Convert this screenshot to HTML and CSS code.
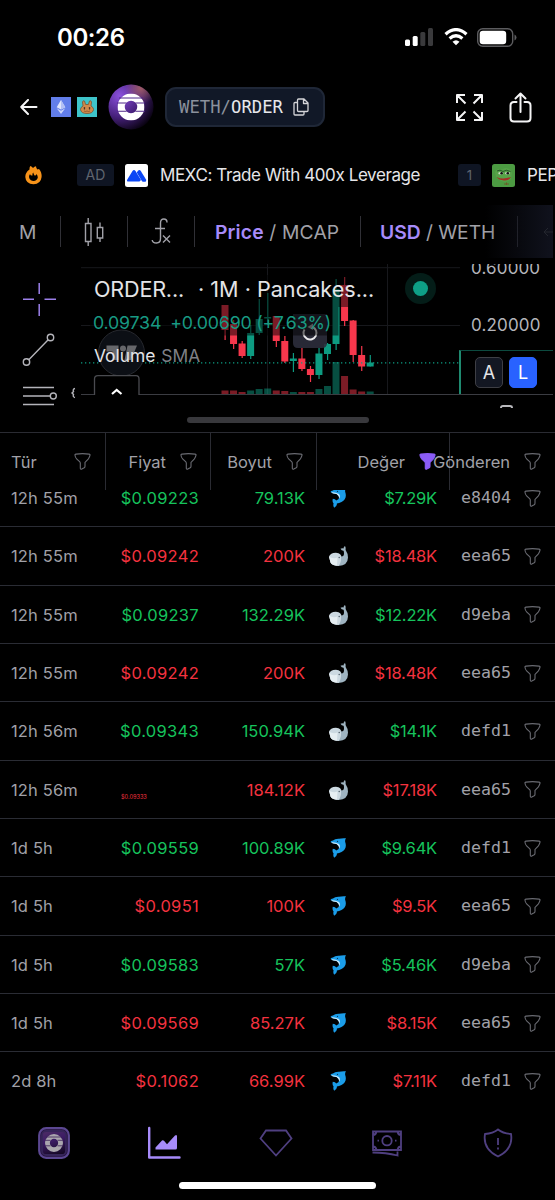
FILE: index.html
```html
<!DOCTYPE html>
<html lang="tr">

<head>
    <meta charset="UTF-8">
    <meta name="viewport" content="width=device-width, initial-scale=1.0">
    <title>WETH/ORDER</title>
    <link rel="stylesheet" href="styles.css">
</head>

<body>
    <svg class="sprite">
        <linearGradient id="orderBg" x1="0.3" y1="0" x2="0.6" y2="1">
            <stop offset="0" stop-color="#7b4a9a" />
            <stop offset="0.4" stop-color="#5b2a9c" />
            <stop offset="1" stop-color="#08010f" />
        </linearGradient>
        <symbol id="filter" viewBox="0 0 17 17">
            <path d="M1 2.2Q.6 1.4 2 1.1Q8.5.2 15 1.1Q16.4 1.4 16 2.2Q15.6 4.4 14.4 5.8L11 9.4V13.2Q11 14.2 10.2 14.7L7.8 16.1Q6.4 16.5 6.3 15.2V10Q6.2 9.3 5.6 8.7L2.6 5.8Q1.3 4.5 1 2.2Z" />
        </symbol>
        <symbol id="ring" viewBox="0 0 26 26">
            <path fill-rule="evenodd" d="M13 0A13 13 0 1 1 13 26A13 13 0 1 1 13 0ZM13 7A6 6 0 1 0 13 19A6 6 0 1 0 13 7Z" />
        </symbol>
        <symbol id="whale" viewBox="0 0 19 20">
            <path fill="#9fb4c1" d="M8 7.500Q11.500 7 12.500 10.500Q15 10.500 15 7.500Q15 5.500 14.500 4.800Q12.500 4.600 11.500 2.800Q13 1.800 14.500 2.600Q14.600 .8 16 0Q17 1.600 16.600 4Q19 7.500 19 11.500Q18.800 19.500 9.500 20Q6 19.500 5 17Z" />
            <path fill="#ccd9e1" d="M0 10.500Q1.500 6.600 7 6.700Q11.800 7 12 11.500Q12.500 16.500 9.500 20Q3 19.800 1.500 16.500Z" />
            <path fill="#e6eef2" d="M0 10.800Q4 13 8.500 11.600L8 19.600Q3 19.300 1.500 16.500Z" />
            <circle cx="10.200" cy="11.500" r=".7" fill="#45545f" />
        </symbol>
        <symbol id="dolphin" viewBox="0 0 17 20">
            <path fill="#1b9de9" d="M.5 4Q.5 2.800 3 2.500Q5 .6 9 .8Q12 0 16 .3Q14.800 2 15.200 4Q17.500 11 11.500 14Q9 15.400 6.800 15.400Q7.500 17.500 4.200 19.800Q2.800 18 3.600 15.600Q2 14 2.800 10.800Q5.500 11 6.200 12.600Q9 11.500 9.200 9.500Q9 7.500 6.500 6Q2 5.600 .5 4Z" />
            <path fill="#cfeafa" d="M1 4.400Q5 3.800 8.500 5.800Q11 8 9.200 10.500Q9.300 7.500 6.500 6Q2.500 5.700 1 4.400Z" />
            <circle cx="7.500" cy="3.400" r=".6" fill="#0b3554" />
        </symbol>
    </svg>

    <div class="status-bar">
        <span class="time">00:26</span>
        <div class="status-icons">
            <svg width="30" height="18" viewBox="0 0 30 18">
                <rect x="0" y="11.500" width="5" height="6.500" rx="1.500" fill="#fff" />
                <rect x="7.700" y="8" width="5" height="10" rx="1.500" fill="#fff" />
                <rect x="15.300" y="4" width="5" height="14" rx="1.500" fill="#3a3a3c" />
                <rect x="23" y="0" width="5" height="18" rx="1.500" fill="#3a3a3c" />
            </svg>
            <svg width="24" height="18" viewBox="0 0 24 18" fill="none" stroke="#fff" stroke-width="3.200">
                <path d="M1.500 6.200Q12-3 22.500 6.200" />
                <path d="M5.600 10.500Q12 5 18.400 10.500" />
                <path d="M8.500 13.700Q12 10.700 15.500 13.700L12 17.300Z" fill="#fff" stroke="none" />
            </svg>
            <svg width="40" height="19" viewBox="0 0 40 19">
                <rect x=".7" y=".7" width="35" height="17.600" rx="5" fill="none" stroke="#5c5c5f" stroke-width="1.400" />
                <rect x="2.700" y="2.700" width="26.500" height="13.600" rx="3.200" fill="#fff" />
                <path d="M37.500 6.500Q39.500 7.500 39.500 9.500T37.500 12.500Z" fill="#5c5c5f" />
            </svg>
        </div>
    </div>

    <div class="header">
        <svg class="back" width="18" height="16" viewBox="0 0 18 16">
            <path d="M8 1L1.200 8L8 15M1.200 8H16.500" />
        </svg>
        <svg class="chain" width="20" height="20" viewBox="0 0 20 20">
            <rect width="20" height="20" fill="#627eea" />
            <path d="M10 3L14.300 10.200L10 12.600L5.700 10.200Z" fill="#dfe5fc" />
            <path d="M10 3L14.300 10.200L10 12.600Z" fill="#b3c0f5" />
            <path d="M5.700 11.200L10 13.700L14.300 11.200L10 17Z" fill="#cdd6f9" />
        </svg>
        <svg class="dex" width="20" height="20" viewBox="0 0 20 20">
            <rect width="20" height="20" fill="#3ec4ca" />
            <path d="M6 9L5.500 5Q6 3 7.500 4L8.600 7.500H11.400L12.500 4Q14 3 14.500 5L14 9Q16.800 10.500 16.500 12.500Q16 16.500 10 16.500T3.500 12.500Q3.300 10.500 6 9Z" fill="#d08a4c" stroke="#7b5433" stroke-width=".8" />
            <rect x="6.800" y="10" width="1.300" height="2.500" rx=".6" fill="#4b3324" />
            <rect x="11.900" y="10" width="1.300" height="2.500" rx=".6" fill="#4b3324" />
            <path d="M7 14Q8.500 15 10 14Q11.500 15 13 14" fill="none" stroke="#7b4a28" stroke-width=".7" />
        </svg>
        <svg class="token" width="46" height="46" viewBox="0 0 46 46">
            <defs>
                <radialGradient id="tokenBg" cx=".25" cy=".25" r=".85">
                    <stop offset="0" stop-color="#8a50dd" />
                    <stop offset=".55" stop-color="#47217c" />
                    <stop offset="1" stop-color="#08020f" />
                </radialGradient>
                <radialGradient id="tokenGlow" cx=".72" cy=".08" r=".35">
                    <stop offset="0" stop-color="#b56a63" stop-opacity=".8" />
                    <stop offset="1" stop-color="#b56a63" stop-opacity="0" />
                </radialGradient>
            </defs>
            <circle cx="23" cy="23" r="22.500" fill="url(#tokenBg)" />
            <circle cx="23" cy="23" r="22.500" fill="url(#tokenGlow)" />
            <use href="#ring" x="9.500" y="9.500" width="27" height="27" fill="#fff" />
            <path d="M11 14H35M9 19H18.500M37 19H27.500M9 27.300H18.500M37 27.300H27.500" stroke="#4f2789" stroke-width="1.100" />
        </svg>
        <div class="pair">
            <span class="pair-text"><span class="base">WETH/</span>ORDER</span>
            <svg width="16" height="18" viewBox="0 0 16 18">
                <path d="M5.500 1H11L15 5V12.500Q15 13.500 14 13.500H5.500Q4.500 13.500 4.500 12.500V2Q4.500 1 5.500 1ZM10.500 1V5.500H15M4.500 4.500H2Q1 4.500 1 5.500V16Q1 17 2 17H10Q11 17 11 16V13.500" />
            </svg>
        </div>
        <svg class="expand" width="27" height="27" viewBox="0 0 27 27">
            <path d="M1 9V1H9M1 1L9.500 9.500M18 1H26V9M26 1L17.500 9.500M1 18V26H9M1 26L9.500 17.500M26 18V26H18M26 26L17.500 17.500" />
        </svg>
        <svg class="share" width="23" height="31" viewBox="0 0 23 31">
            <path d="M7.500 10H5Q1.500 10 1.500 13.500V26Q1.500 29.500 5 29.500H18Q21.500 29.500 21.500 26V13.500Q21.500 10 18 10H15.500M11.500 20V2M6.500 6.500L11.500 1.500L16.500 6.500" />
        </svg>
    </div>

    <div class="trending">
        <svg class="flame" width="17" height="19" viewBox="0 0 17 19">
            <path fill-rule="evenodd" fill="#f7931a" d="M4.500 3.500Q4.300 1.500 5.200 0Q7 .5 8 2Q9.500.4 11 .2Q11 2 12.500 3.500L14 3Q17 6.500 16.600 11Q15.800 18 8.500 18.300Q.8 18 .3 11Q.2 6.500 4.500 3.500ZM5 8Q3.500 10 4.200 12Q5.500 15 8.500 15Q12 14.800 12.800 11.500Q12.800 9.500 11.500 8Q11 10 9.500 9.500Q8.500 8 8.300 6.500Q7 7.500 7.500 9.500Q5.500 10 5 8Z" />
        </svg>
        <span class="chip chip-ad">AD</span>
        <svg class="ad-logo" width="23" height="23" viewBox="0 0 23 23">
            <rect width="23" height="23" rx="2.500" fill="#fff" />
            <path d="M2.500 17.500Q1.500 16.800 2.300 15.500L7.500 7Q9 5 10.500 7L16 16L14.500 17.500Z" fill="#0b46f5" />
            <path d="M11.800 8.500L13 6.800Q14.500 5.200 15.800 7L21 15.500Q21.700 17 20.500 17.700H18Q17.300 17.700 16.700 16.800Z" fill="#0b46f5" />
        </svg>
        <span class="trend-name ad-name">MEXC: Trade With 400x Leverage</span>
        <span class="chip chip-rank">1</span>
        <svg class="pepe" width="23" height="23" viewBox="0 0 23 23">
            <rect width="23" height="23" rx="2.500" fill="#4c9b42" />
            <path d="M3 8Q5 3.500 10 5.500Q14 2.500 18 5.500L20 9L19 15Q15 19 9 17L4 13Z" fill="#56a348" />
            <path d="M5 7Q8 5 11 7.500Q14 5 18.500 7.500" fill="none" stroke="#28582a" />
            <ellipse cx="8.800" cy="9.300" rx="2.600" ry="1.200" fill="#c9d8c0" />
            <ellipse cx="15.500" cy="9.300" rx="2.600" ry="1.200" fill="#c9d8c0" />
            <circle cx="9.600" cy="9.300" r="1.300" fill="#111" />
            <circle cx="15.800" cy="9.300" r="1.300" fill="#111" />
            <path d="M4.500 13Q11 16 19 13Q17 17 12 16.500Q6.500 16 4.500 13Z" fill="#a52f26" />
            <path d="M12 20H17M14.500 18.500V21" stroke="#6d5a2b" />
        </svg>
        <span class="trend-name">PEP</span>
    </div>

    <div class="toolbar">
        <span class="tool interval">M</span>
        <span class="tool tool-icon">
            <svg width="20" height="30" viewBox="0 0 20 30">
                <path d="M1.500 6.500H7V24.500H1.500ZM4.200 1V6.500M4.200 24.500V29M13.300 10.500H18.700V21H13.300ZM16 5.500V10.500M16 21V25" />
            </svg>
        </span>
        <span class="tool tool-icon">
            <svg width="21" height="27" viewBox="0 0 21 27">
                <path d="M16 4.500Q16 1 12.800 1Q9.500 1 9.500 5V20.500Q9.500 25 5.500 25Q1.500 25 1.200 22M4 10.500H14M12 17.500L19 24.500M19 17.500L12 24.500" />
            </svg>
        </span>
        <span class="tool price-toggle"><b>Price</b> / MCAP</span>
        <span class="tool usd-toggle"><b>USD</b> / WETH</span>
        <span class="undo">
            <svg width="10" height="10" viewBox="0 0 10 10"><path d="M5 1L1 5L5 9M1 5H10" /></svg>
        </span>
    </div>

    <div class="chart">
        <div class="draw-tools">
            <svg width="81" height="150" viewBox="0 0 81 150" fill="none">
                <path d="M39.200 25V36M39.200 46V58M23 41.300H34M44.500 41.300H56" stroke="#9c80ea" stroke-width="1.500" />
                <g stroke="#b4b4ba" stroke-width="1.400">
                    <circle cx="26.500" cy="104" r="3.200" />
                    <circle cx="50.500" cy="79.500" r="3.200" />
                    <path d="M28.800 101.700L48.200 81.800M23 129.500H54M23 138H50M23 146.500H54" />
                    <circle cx="53.300" cy="138" r="3" />
                    <path d="M75 130.500Q72.500 131 73.500 133.500L72 135L73.500 136.500Q72.500 139 75 139.500" />
                </g>
            </svg>
        </div>
        <div class="plot">
            <svg id="candles" width="379" height="137" viewBox="81 258 379 137"></svg>
            <div class="legend">
                <div class="legend-row title"><span class="symbol">ORDER...</span><span>· 1M · Pancakes...</span></div>
                <div class="legend-row values"><span>0.09734</span><span>+0.00690 (+7.63%)</span></div>
                <div class="legend-row volume">Volume <span>SMA</span></div>
            </div>
            <span class="live-dot"></span>
        </div>
        <div class="axis">
            <span class="axis-label first">0.60000</span>
            <span class="axis-label">0.20000</span>
            <div class="scale-btns">
                <span class="scale">A</span>
                <span class="scale active">L</span>
            </div>
        </div>
    </div>

    <div class="resize"><span class="handle"></span><span class="gear"></span></div>

    <div class="table">
        <div class="thead">
            <div class="th type">Tür<svg class="filter"><use href="#filter" /></svg></div>
            <div class="th">Fiyat<svg class="filter"><use href="#filter" /></svg></div>
            <div class="th">Boyut<svg class="filter"><use href="#filter" /></svg></div>
            <div class="th">Değer<svg class="filter on"><use href="#filter" /></svg></div>
            <div class="th">Gönderen<svg class="filter"><use href="#filter" /></svg></div>
        </div>
        <div class="tbody">
            <div class="rows" id="rows"></div>
        </div>
    </div>

    <div class="navbar">
        <span class="nav-item">
            <svg width="32" height="32" viewBox="0 0 32 32">
                <rect x="1.200" y="1.200" width="29.600" height="29.600" rx="7" fill="#231039" stroke="#5b4791" stroke-width="2.200" />
                <rect x="4" y="4" width="24" height="24" rx="4" fill="url(#orderBg)" opacity=".45" />
                <use href="#ring" x="7" y="7" width="18" height="18" fill="#aaa6ae" />
                <path d="M8 10H24M7 13.300H12.500M25 13.300H19.500M7 18.800H12.500M25 18.800H19.500" stroke="#3b2157" stroke-width=".8" />
            </svg>
        </span>
        <span class="nav-item chart-nav">
            <svg width="34" height="34" viewBox="0 0 34 34">
                <path d="M2.200 2V31.500H32.500" fill="none" stroke="#a78bfa" stroke-width="2.400" stroke-linecap="round" stroke-linejoin="round" />
                <path d="M8.500 23.500V21.500L15 14.500Q16 13.700 17 14.800L20 18.200L28 9.500Q30 8 30 10.500V22Q30 23.500 28.500 23.500Z" fill="#a78bfa" />
            </svg>
        </span>
        <span class="nav-item">
            <svg width="34" height="28" viewBox="0 0 34 28">
                <path d="M7 1.500H27L32.500 9.500L17 26.500L1.500 9.500Z" />
            </svg>
        </span>
        <span class="nav-item cash">
            <svg width="32" height="27" viewBox="0 0 32 27">
                <path d="M2 1.500H30V20H2ZM2 5Q5 5 5.500 1.500M30 5Q27 5 26.500 1.500M2 16.500Q5 16.500 5.500 20M30 16.500Q27 16.500 26.500 20M6.500 10.700H8M24 10.700H25.500M1.500 22.500Q15 22.500 26.500 25.500V21.500" />
                <circle cx="16" cy="10.700" r="4.700" />
            </svg>
        </span>
        <span class="nav-item">
            <svg width="30" height="30" viewBox="0 0 30 30">
                <path d="M15 1.500Q20 5.500 28 6Q30.500 21 15 28.500Q-.5 21 2 6Q10 5.500 15 1.500ZM15 10V17M15 19.500V21.500" />
            </svg>
        </span>
        <span class="home-indicator"></span>
    </div>

    <script>
        (function() {
            // zaman, fiyat, boyut, ikon, değer, gönderen, yön
            var trades = [
                ['12h 55m', '$0.09223', '79.13K', 'dolphin', '$7.29K', 'e8404', 'buy'],
                ['12h 55m', '$0.09242', '200K', 'whale', '$18.48K', 'eea65', 'sell'],
                ['12h 55m', '$0.09237', '132.29K', 'whale', '$12.22K', 'd9eba', 'buy'],
                ['12h 55m', '$0.09242', '200K', 'whale', '$18.48K', 'eea65', 'sell'],
                ['12h 56m', '$0.09343', '150.94K', 'whale', '$14.1K', 'defd1', 'buy'],
                ['12h 56m', '$0.09333', '184.12K', 'whale', '$17.18K', 'eea65', 'sell', 'tiny'],
                ['1d 5h', '$0.09559', '100.89K', 'dolphin', '$9.64K', 'defd1', 'buy'],
                ['1d 5h', '$0.0951', '100K', 'dolphin', '$9.5K', 'eea65', 'sell'],
                ['1d 5h', '$0.09583', '57K', 'dolphin', '$5.46K', 'd9eba', 'buy'],
                ['1d 5h', '$0.09569', '85.27K', 'dolphin', '$8.15K', 'eea65', 'sell'],
                ['2d 8h', '$0.1062', '66.99K', 'dolphin', '$7.11K', 'defd1', 'sell']
            ];

            document.getElementById('rows').innerHTML = trades.map(function(t) {
                return '<div class="row ' + t[6] + '">' +
                    '<span class="ago">' + t[0] + '</span>' +
                    '<span class="num price ' + (t[7] || '') + '">' + t[1] + '</span>' +
                    '<span class="num">' + t[2] + '</span>' +
                    '<span class="num value"><svg class="' + t[3] + '"><use href="#' + t[3] + '"/></svg>' + t[4] + '</span>' +
                    '<span class="maker">' + t[5] + '<svg class="filter"><use href="#filter"/></svg></span>' +
                    '</div>';
            }).join('');

            // up, high, body top, body bottom, low, volume
            var candles = [
                [0, 305, 305, 330, 340, 3.5],
                [0, 320, 324, 344, 349, 3.5],
                [0, 341, 343.5, 356, 358, 2],
                [1, 325, 333, 356, 359, 3.5],
                [1, 299, 319, 333, 335, 5],
                [1, 293, 317, 318.5, 325, 5.5],
                [0, 316, 316, 341, 347, 3.5],
                [0, 336, 341, 361.5, 363, 3],
                [1, 353, 358.5, 361, 372, 2],
                [0, 348, 358.5, 369, 371, 2],
                [0, 366, 369, 375, 382, 2],
                [1, 348, 353.5, 375, 379, 5],
                [1, 343, 344, 354, 360, 8],
                [1, 279, 289, 344, 350, 32],
                [0, 277, 285, 321, 326, 18],
                [0, 320, 320.5, 355, 362, 4.5],
                [0, 346, 355, 366.5, 371, 2.5],
                [1, 355, 362.5, 366.5, 366.5, 2.5]
            ];

            var out = '<path d="M81 267.700H460M81 325.500H460M267.500 264V394M387.500 264V394" stroke="#17181c"/>';
            candles.forEach(function(c, i) {
                var x = 225 + i * 8.54;
                var color = c[0] ? '#0d9b81' : '#f7374c';
                out += '<rect x="' + (x - 3.5) + '" y="' + (394 - c[5]) + '" width="7" height="' + c[5] + '" fill="' + color + '" opacity=".5"/>';
                out += '<rect x="' + (x - 0.5) + '" y="' + c[1] + '" width="1.2" height="' + (c[4] - c[1]) + '" fill="' + color + '"/>';
                out += '<rect x="' + (x - 3.5) + '" y="' + c[2] + '" width="7" height="' + (c[3] - c[2]) + '" fill="' + color + '"/>';
            });
            out += '<path d="M81 362.800H460" stroke="#0d9b81" stroke-width="1.300" stroke-dasharray="1.300 2.700"/>';
            // reload button
            out += '<path d="M293 314H327V343Q327 348 322 348H298Q293 348 293 343Z" fill="#2c2e3c" opacity=".9"/>';
            out += '<path d="M304.500 329.500A6.500 6.500 0 1 0 312.500 327" fill="none" stroke="#e8e8ea" stroke-width="2"/><path d="M307.500 327L313 323.500V330Z" fill="#aaa"/>';
            // legend shade
            out += '<path d="M90 275H380V307H338.500V335.500H90Z" fill="#000" opacity=".5"/>';
            // watermark
            out += '<circle cx="121.500" cy="353" r="23" fill="#0c0f15" stroke="#26282e"/>';
            out += '<path d="M106.500 345.500H118.500V360H112.500V351.500H106.500ZM127.500 345.500H137L131 360H124.500Z" fill="#66676b"/><circle cx="123" cy="348.500" r="3" fill="#66676b"/>';
            out += '<path d="M94.500 395V379Q94.500 375.700 98 375.700H136Q139 375.700 139 379V395" fill="#000" stroke="#4a4b50" stroke-width="1.300"/>';
            out += '<path d="M112 394L116.700 390L121.500 394" fill="none" stroke="#fff" stroke-width="2.200"/>';
            document.getElementById('candles').innerHTML = out;
        })();
    </script>
</body>

</html>
```
FILE: styles.css
```css
* {
    margin: 0;
    padding: 0;
    box-sizing: border-box;
}

html,
body {
    width: 555px;
    height: 1200px;
    overflow: hidden;
}

body {
    display: flex;
    flex-direction: column;
    background-color: #000;
    color: #a1a1a8;
    font-family: Inter, "Liberation Sans", sans-serif;
    font-size: 16.5px;
}

svg {
    display: block;
    flex: none;
}

.sprite {
    position: absolute;
    width: 0;
    height: 0;
}

/* status bar */

.status-bar {
    height: 74px;
    flex: none;
    display: flex;
    justify-content: space-between;
    align-items: center;
    padding: 0 38px 0 57px;
}

.time {
    color: #fff;
    font-size: 24px;
    font-weight: 600;
    letter-spacing: -0.4px;
}

.status-icons {
    display: flex;
    align-items: center;
    gap: 9px;
}

/* header */

.header {
    height: 66px;
    flex: none;
    display: flex;
    align-items: center;
    padding: 0 23px 0 20px;
}

.header .back,
.header .expand,
.header .share,
.pair svg {
    fill: none;
    stroke: #f4f4f5;
    stroke-width: 2;
    stroke-linejoin: round;
}

.header .back,
.header .share {
    stroke-linecap: round;
}

.chain {
    margin-left: 13px;
}

.dex {
    margin-left: 6px;
}

.token {
    margin-left: 11px;
}

.pair {
    width: 160px;
    height: 40px;
    margin-left: 11px;
    padding: 0 14px 0 12px;
    display: flex;
    align-items: center;
    justify-content: space-between;
    background-color: #111827;
    border: 2px solid #1f2737;
    border-radius: 11px;
}

.pair svg {
    stroke: #d4d4d8;
    stroke-width: 1.3;
}

.pair-text {
    font-family: "DejaVu Sans Mono", "Liberation Mono", monospace;
    font-size: 17.2px;
    letter-spacing: 0.05px;
    color: #e8e8ec;
}

.base {
    color: #8b919d;
}

.expand {
    margin-left: auto;
}

.share {
    margin-left: 26px;
}

/* trending */

.trending {
    height: 65px;
    flex: none;
    display: flex;
    align-items: center;
    padding: 5px 0 0 25px;
    overflow: hidden;
    white-space: nowrap;
}

.chip {
    height: 22px;
    line-height: 22px;
    text-align: center;
    font-size: 14px;
    color: #60656f;
    background-color: #0f1523;
    border-radius: 3px;
    flex: none;
}

.chip-ad {
    width: 37px;
    margin-left: 35px;
}

.chip-rank {
    width: 23px;
    font-size: 13px;
}

.ad-logo {
    margin-left: 11px;
}

.trend-name {
    font-size: 17px;
    letter-spacing: -0.4px;
    color: #e6e6e9;
    margin-left: 12px;
    flex: none;
}

.ad-name {
    width: 298px;
}

.pepe {
    margin-left: 11px;
}

/* chart toolbar */

.toolbar {
    height: 53px;
    flex: none;
    display: flex;
    align-items: center;
    position: relative;
    font-size: 19.3px;
    white-space: nowrap;
}

.tool {
    height: 31px;
    display: flex;
    align-items: center;
    flex: none;
    border-right: 1px solid #303036;
    white-space: pre;
}

.tool b {
    color: #a78bfa;
    font-weight: 600;
}

.tool svg {
    fill: none;
    stroke: #a1a1a8;
    stroke-width: 1.4;
}

.interval {
    width: 61px;
    padding-left: 19px;
}

.tool-icon {
    width: 67px;
    justify-content: center;
}

.price-toggle {
    width: 166px;
    padding-left: 20px;
    letter-spacing: 0.15px;
}

.usd-toggle {
    width: 157px;
    padding-left: 19px;
    letter-spacing: -0.05px;
}

.undo {
    position: absolute;
    top: 0;
    right: 2px;
    width: 68px;
    height: 53px;
    display: flex;
    align-items: center;
    justify-content: flex-end;
    background: linear-gradient(to right, rgba(17, 19, 31, 0), #10121d);
}

.undo svg {
    fill: none;
    stroke: #24262f;
}

/* chart */

.chart {
    height: 150px;
    flex: none;
    display: flex;
}

.draw-tools {
    width: 81px;
}

.plot {
    position: relative;
    width: 378px;
    height: 137px;
    border-bottom: 1px solid #3b3c42;
}

.legend {
    position: absolute;
    top: 16px;
    left: 12px;
    white-space: nowrap;
}

.legend-row {
    height: 33px;
    line-height: 31px;
}

.title {
    color: #e4e4e7;
    font-size: 21.6px;
    padding-left: 1px;
    display: flex;
}

.symbol {
    width: 104px;
    letter-spacing: -0.2px;
}

.values {
    color: #189a83;
    font-size: 17.8px;
    letter-spacing: -0.2px;
    display: flex;
    gap: 9px;
}

.volume {
    color: #e4e4e7;
    font-size: 17.4px;
    padding-left: 1px;
}

.volume span {
    margin-left: 1px;
    color: #7f8086;
}

.live-dot {
    position: absolute;
    left: 332px;
    top: 23px;
    width: 15px;
    height: 15px;
    border-radius: 50%;
    background-color: #0e9f86;
    box-shadow: 0 0 0 8px #041d18;
}

.axis {
    width: 94px;
    height: 137px;
    overflow: hidden;
    border-bottom: 1px solid #3b3c42;
    display: flex;
    flex-direction: column;
}

.axis-label {
    height: 20px;
    line-height: 20px;
    margin: 37px 0 0 12px;
    font-size: 17px;
    color: #b4b4ba;
    letter-spacing: 0.15px;
}

.axis-label.first {
    height: 14px;
    line-height: 8px;
    margin-top: 6px;
    overflow: hidden;
}

.scale-btns {
    height: 44px;
    margin-top: auto;
    display: flex;
    align-items: center;
    gap: 6px;
    padding-left: 14px;
    border-top: 1px solid #0c4a3f;
    border-left: 2px solid #1f8a70;
}

.scale {
    width: 28px;
    height: 31px;
    line-height: 29px;
    text-align: center;
    font-size: 18px;
    color: #e4e4e7;
    background-color: #131722;
    border: 1px solid #3e3f45;
    border-radius: 5px;
}

.scale.active {
    background-color: #2962ff;
    border-color: #2962ff;
    color: #fff;
}

.resize {
    height: 24px;
    flex: none;
    position: relative;
    display: flex;
    justify-content: center;
    align-items: center;
}

.handle {
    width: 182px;
    height: 6px;
    border-radius: 3px;
    background-color: #38383c;
}

.gear {
    position: absolute;
    right: 42px;
    top: -3px;
    width: 13px;
    height: 3px;
    border: 2px solid #b8b8bc;
    border-bottom: 0;
    border-radius: 3px 3px 0 0;
}

/* trades */

.table {
    height: 678px;
    flex: none;
    border-top: 1px solid #2a2b32;
}

.thead,
.row {
    display: grid;
    grid-template-columns: 106px 105px 106px 133px 105px;
}

.thead {
    height: 57px;
}

.th {
    display: flex;
    align-items: center;
    justify-content: flex-end;
    gap: 14px;
    padding-right: 13px;
    min-width: 0;
    border-right: 1px solid #2a2b32;
    white-space: nowrap;
}

.th:last-child {
    padding-right: 14px;
    border-right: 0;
}

.th.type {
    justify-content: space-between;
    padding-left: 11px;
    padding-right: 14px;
}

.filter {
    width: 17px;
    height: 17px;
    fill: none;
    stroke: #696a71;
    stroke-width: 1.1;
}

.filter.on {
    fill: #8b5cf6;
    stroke: #8b5cf6;
}

.tbody {
    height: 620px;
    overflow: hidden;
}

.rows {
    margin-top: -21px;
}

.row {
    height: 58.33px;
    line-height: 16px;
    padding-top: 1px;
    align-items: center;
    border-bottom: 1px solid #2a2c34;
}

.row:last-child {
    border-bottom-color: #111;
}

.ago {
    padding-left: 11px;
    letter-spacing: 0.15px;
}

.num {
    text-align: right;
    padding-right: 12px;
}

.buy .num {
    color: #16c35c;
}

.sell .num {
    color: #f4323f;
}

.price {
    letter-spacing: 0.3px;
}

.price.tiny {
    font-size: 5.6px;
    letter-spacing: 0;
    text-align: left;
    padding: 14px 0 0 15px;
}

.value {
    display: flex;
    justify-content: space-between;
    align-items: center;
    padding-left: 12px;
    padding-right: 13px;
    letter-spacing: -0.2px;
}

.whale {
    width: 19px;
    height: 20px;
}

.dolphin {
    width: 17px;
    height: 20px;
    margin-left: 1px;
}

.maker {
    display: flex;
    align-items: center;
    justify-content: space-between;
    padding: 0 14px 0 11px;
    font-family: "DejaVu Sans Mono", "Liberation Mono", monospace;
    font-size: 16.6px;
}

/* bottom navigation */

.navbar {
    position: relative;
    height: 90px;
    display: grid;
    grid-template-columns: repeat(5, 111px);
    padding-top: 10px;
}

.nav-item {
    height: 46px;
    display: flex;
    align-items: center;
    justify-content: center;
    padding-right: 3px;
    fill: none;
    stroke: #4f3f80;
    stroke-width: 1.8;
}

.nav-item use,
.chart-nav path:last-child {
    stroke: none;
}

.chart-nav {
    padding-right: 5px;
}

.home-indicator {
    position: absolute;
    left: 179px;
    bottom: 11px;
    width: 197px;
    height: 7px;
    border-radius: 4px;
    background-color: #fff;
}
```
